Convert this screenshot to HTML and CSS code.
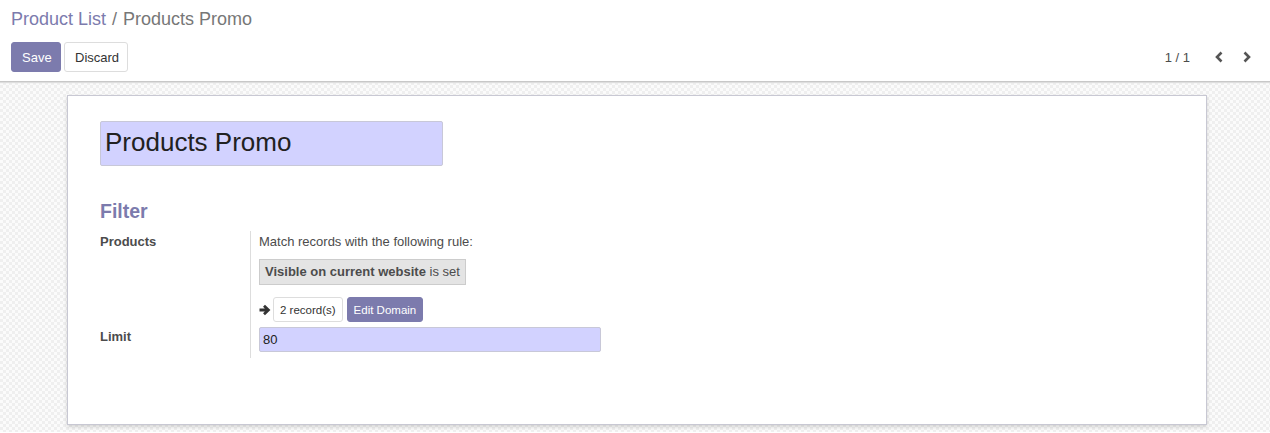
FILE: index.html
```html
<!DOCTYPE html>
<html>
<head>
<meta charset="utf-8">
<link rel="stylesheet" href="styles.css">
</head>
<body>
<div class="cp">
  <div class="breadcrumb"><a class="bc-link">Product List</a><span class="bc-sep">/</span><span class="bc-active">Products Promo</span></div>
  <div class="cp-row">
    <div class="cp-buttons">
      <button class="btn btn-primary">Save</button>
      <button class="btn btn-secondary">Discard</button>
    </div>
    <div class="pager">
      <span class="pager-value">1 / 1</span>
      <svg class="chev" viewBox="0 0 10 12" width="10" height="12"><path d="M7.5 1.5 L3 6 L7.5 10.5" fill="none" stroke="#555" stroke-width="2.6"/></svg>
      <svg class="chev" viewBox="0 0 10 12" width="10" height="12"><path d="M2.5 1.5 L7 6 L2.5 10.5" fill="none" stroke="#555" stroke-width="2.6"/></svg>
    </div>
  </div>
</div>
<div class="content">
  <div class="sheet">
    <div class="title-input">Products Promo</div>
    <div class="separator">Filter</div>
    <div class="group">
      <div class="labels">
        <div class="label label-products">Products</div>
        <div class="label label-limit">Limit</div>
      </div>
      <div class="fields">
        <div class="rule-text">Match records with the following rule:</div>
        <div class="domain-box"><b>Visible on current website</b> is set</div>
        <div class="domain-actions">
          <svg class="arrow" viewBox="0 0 12 12" width="12" height="12"><path d="M0.5 6 H9 M5 1.8 L9.4 6 L5 10.2" fill="none" stroke="#333" stroke-width="2.8"/></svg>
          <button class="btn-sm btn-white">2 record(s)</button>
          <button class="btn-sm btn-purple">Edit Domain</button>
        </div>
        <div class="limit-input">80</div>
      </div>
    </div>
  </div>
</div>
</body>
</html>
```
FILE: styles.css
```css
html, body {
  margin: 0;
  padding: 0;
  height: 100%;
}
body {
  font-family: "Liberation Sans", Arial, sans-serif;
  font-size: 13px;
  color: #4c4c4c;
  background: #fff;
  overflow: hidden;
}
.cp {
  padding: 6px 18px 9px 11px;
  background: #fff;
  border-bottom: 1px solid #c8c8c8;
  box-shadow: 0 1px 1px #dedede;
  position: relative;
}
.breadcrumb {
  font-size: 18px;
  line-height: 26px;
  height: 26px;
  margin-bottom: 10px;
}
.bc-link { color: #7c7bad; }
.bc-sep { color: #777; padding: 0 6px; }
.bc-active { color: #777; }
.cp-row {
  display: flex;
  justify-content: space-between;
  align-items: center;
  height: 30px;
}
.cp-buttons { display: flex; gap: 3px; }
.btn {
  font-family: inherit;
  font-size: 13px;
  height: 30px;
  padding: 0 10px;
  border-radius: 3px;
  border: 1px solid transparent;
  cursor: pointer;
}
.btn-primary { background: #7c7bad; color: #fff; border-color: #7c7bad; width: 50px; }
.btn-secondary { background: #fff; color: #333; border-color: #ddd; width: 64px; }
.pager {
  display: flex;
  align-items: center;
  color: #4c4c4c;
}
.pager-value { margin-right: 24px; }
.chev { margin-left: 18px; }
.chev:first-of-type { margin-left: 0; }
.content {
  height: calc(100% - 83px);
  background-color: #fbfbfb;
  background-image:
    linear-gradient(45deg, #efefef 25%, transparent 25%, transparent 75%, #efefef 75%),
    linear-gradient(45deg, #efefef 25%, transparent 25%, transparent 75%, #efefef 75%);
  background-size: 6px 6px;
  background-position: 0 0, 3px 3px;
  padding-top: 13px;
  box-sizing: border-box;
}
.sheet {
  margin-left: 67px;
  width: 1140px;
  height: 330px;
  box-sizing: border-box;
  background: #fff;
  border: 1px solid #c8c8d3;
  box-shadow: 0 2px 4px rgba(0,0,0,0.15);
  padding: 25px 32px 24px;
}
.title-input {
  width: 343px;
  height: 45px;
  box-sizing: border-box;
  background: #d2d2ff;
  border: 1px solid #c8c8d8;
  border-radius: 2px;
  font-size: 26px;
  line-height: 41px;
  padding-left: 4px;
  color: #212121;
}
.separator {
  margin-top: 34px;
  font-size: 19.5px;
  font-weight: bold;
  color: #7c7bad;
  line-height: 22px;
}
.group {
  display: flex;
  margin-top: 9px;
}
.labels {
  width: 150px;
  font-weight: bold;
  color: #4c4c4c;
}
.label-products { margin-top: 3px; }
.label-limit { margin-top: 80px; }
.fields {
  border-left: 1px solid #ddd;
  padding: 3px 0 6px 8px;
}
.rule-text { line-height: 15px; color: #4c4c4c; }
.domain-box {
  margin-top: 10px;
  display: inline-block;
  background: #e4e4e4;
  border: 1px solid #ccc;
  height: 26px;
  box-sizing: border-box;
  line-height: 24px;
  padding: 0 5px;
  color: #4c4c4c;
}
.domain-actions {
  display: flex;
  align-items: center;
  margin-top: 12px;
  height: 25px;
}
.arrow { margin-right: 2px; }
.btn-sm {
  font-family: inherit;
  font-size: 11.5px;
  height: 25px;
  padding: 0 6px;
  border-radius: 3px;
  border: 1px solid transparent;
  margin-right: 4px;
}
.btn-white { background: #fff; border-color: #ddd; color: #333; }
.btn-purple { background: #7c7bad; color: #fff; border-color: #7c7bad; }
.limit-input {
  margin-top: 5px;
  width: 342px;
  height: 25px;
  box-sizing: border-box;
  background: #d2d2ff;
  border: 1px solid #c8c8d8;
  border-radius: 2px;
  line-height: 23px;
  padding-left: 3px;
  color: #212121;
}
```
